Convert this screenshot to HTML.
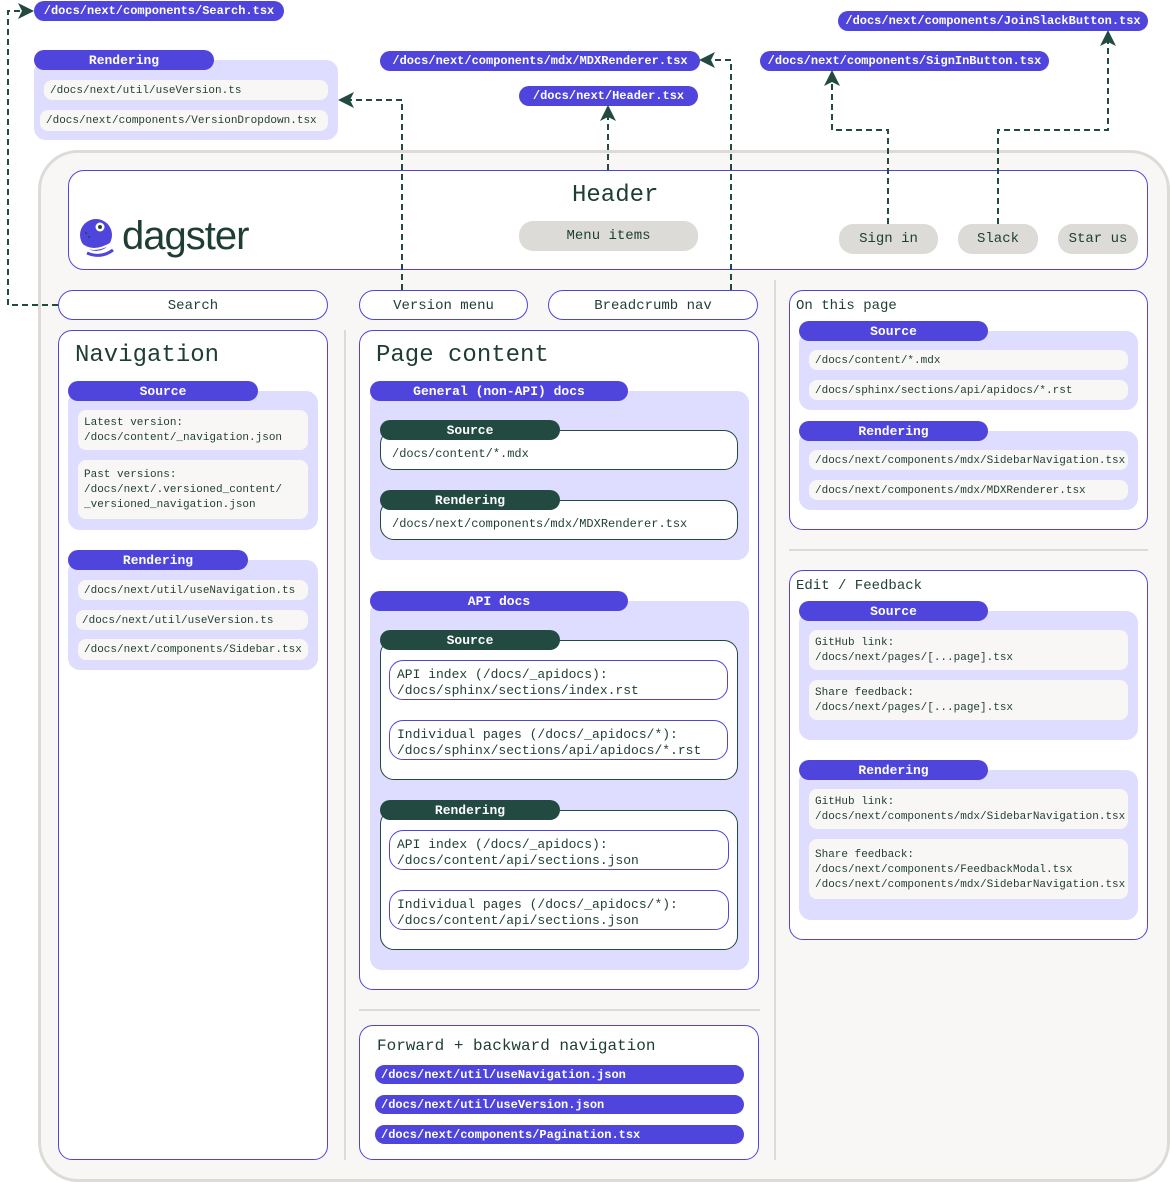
<!DOCTYPE html>
<html><head><meta charset="utf-8"><style>
*{box-sizing:border-box;margin:0;padding:0}
body{width:1170px;height:1182px;background:#fff;position:relative;overflow:hidden;font-family:"Liberation Mono",monospace;color:#1e3d35}
div{position:absolute}
.p{background:#4f45dc;color:#fff;font-weight:bold;font-size:13px;border-radius:10px;height:20px;line-height:21px;text-align:center;white-space:nowrap}
.pl{text-align:left;padding-left:10px;font-size:12px}
.d{background:#224a40;color:#fff;font-weight:bold;font-size:13px;border-radius:10px;height:20px;line-height:21px;text-align:center}
.lav{background:#dedcff;border-radius:12px}
.it{background:#f8f7f5;border-radius:8px;font-size:11px;padding:2px 6px 0;line-height:15px;display:flex;flex-direction:column;justify-content:center}
.box{background:#fff;border:1px solid #4f45dc;border-radius:14px}
.gb{background:#fff;border:1px solid #224a40;border-radius:14px;font-size:12px}
.pb{background:#fff;border:1px solid #4f45dc;border-radius:14px;font-size:13px;padding:6px 7px;line-height:16px}
.pill{background:#fff;border:1px solid #4f45dc;border-radius:15px;text-align:center;font-size:14px;line-height:30px}
.gr{background:#dcdbd8;border-radius:14px;text-align:center;font-size:14px;line-height:30px}
.t{font-size:14px}
</style></head><body>
<div class="p" style="left:34px;top:1px;width:250px;font-size:12px">/docs/next/components/Search.tsx</div>
<div class="lav" style="left:34px;top:60px;width:304px;height:80px"></div>
<div class="p" style="left:34px;top:50px;width:180px">Rendering</div>
<div class="it" style="left:44px;top:80px;width:284px;height:20px">/docs/next/util/useVersion.ts</div>
<div class="it" style="left:40px;top:110px;width:288px;height:21px">/docs/next/components/VersionDropdown.tsx</div>
<div class="p" style="left:380px;top:51px;width:320px;font-size:12px">/docs/next/components/mdx/MDXRenderer.tsx</div>
<div class="p" style="left:519px;top:86px;width:179px;font-size:12px">/docs/next/Header.tsx</div>
<div class="p" style="left:760px;top:51px;width:289px;font-size:12px">/docs/next/components/SignInButton.tsx</div>
<div class="p" style="left:838px;top:11px;width:310px;font-size:12px">/docs/next/components/JoinSlackButton.tsx</div>

<div style="left:38px;top:150px;width:1132px;height:1032px;background:#f8f7f5;border:3px solid #dcdbd8;border-radius:40px"></div>
<div class="box" style="left:68px;top:170px;width:1080px;height:100px;border-radius:16px"></div>
<div style="left:572px;top:182px;font-size:24px">Header</div>
<div class="gr" style="left:519px;top:221px;width:179px">Menu items</div>
<div class="gr" style="left:839px;top:224px;width:99px">Sign in</div>
<div class="gr" style="left:958px;top:224px;width:80px">Slack</div>
<div class="gr" style="left:1058px;top:224px;width:80px">Star us</div>
<svg style="position:absolute;left:77px;top:218px" width="40" height="40" viewBox="0 0 40 40"><circle cx="19" cy="17" r="16" fill="#4f45dc"/><path d="M3 25 q12 12 32 0" stroke="#fff" stroke-width="2" fill="none"/><path d="M6 30 q14 9 30 -2" stroke="#fff" stroke-width="2" fill="none"/><path d="M10 35 q14 6 26 -3" stroke="#4f45dc" stroke-width="3" fill="none"/><circle cx="23" cy="9" r="4.5" fill="#fff"/><circle cx="23" cy="9" r="2" fill="#224a40"/><circle cx="9" cy="15" r="1" fill="#224a40"/><circle cx="12" cy="19" r="1" fill="#224a40"/></svg>
<div style="left:122px;top:214px;font-family:'Liberation Sans',sans-serif;font-size:40px;color:#1e3d35;letter-spacing:-1px">dagster</div>

<div class="pill" style="left:58px;top:290px;width:270px;height:30px">Search</div>
<div class="pill" style="left:359px;top:290px;width:169px;height:30px">Version menu</div>
<div class="pill" style="left:548px;top:290px;width:210px;height:30px">Breadcrumb nav</div>
<div style="left:344px;top:330px;width:2px;height:830px;background:#dcdbd8"></div>
<div style="left:774px;top:280px;width:2px;height:880px;background:#dcdbd8"></div>

<div class="box" style="left:58px;top:330px;width:270px;height:830px"></div>
<div style="left:75px;top:342px;font-size:24px">Navigation</div>
<div class="lav" style="left:68px;top:391px;width:250px;height:139px"></div>
<div class="p" style="left:68px;top:381px;width:190px">Source</div>
<div class="it" style="left:78px;top:410px;width:230px;height:40px">Latest version:<br>/docs/content/_navigation.json</div>
<div class="it" style="left:78px;top:460px;width:230px;height:59px">Past versions:<br>/docs/next/.versioned_content/<br>_versioned_navigation.json</div>
<div class="lav" style="left:68px;top:560px;width:250px;height:110px"></div>
<div class="p" style="left:68px;top:550px;width:180px">Rendering</div>
<div class="it" style="left:78px;top:580px;width:230px;height:20px">/docs/next/util/useNavigation.ts</div>
<div class="it" style="left:76px;top:610px;width:232px;height:20px">/docs/next/util/useVersion.ts</div>
<div class="it" style="left:78px;top:639px;width:230px;height:21px">/docs/next/components/Sidebar.tsx</div>

<div class="box" style="left:359px;top:330px;width:400px;height:660px"></div>
<div style="left:376px;top:342px;font-size:24px">Page content</div>
<div class="lav" style="left:370px;top:391px;width:379px;height:169px"></div>
<div class="p" style="left:370px;top:381px;width:258px">General (non-API) docs</div>
<div class="gb" style="left:380px;top:430px;width:358px;height:40px;padding:16px 0 0 11px">/docs/content/*.mdx</div>
<div class="d" style="left:380px;top:420px;width:180px">Source</div>
<div class="gb" style="left:380px;top:500px;width:358px;height:40px;padding:16px 0 0 11px">/docs/next/components/mdx/MDXRenderer.tsx</div>
<div class="d" style="left:380px;top:490px;width:180px">Rendering</div>
<div class="lav" style="left:370px;top:601px;width:379px;height:369px"></div>
<div class="p" style="left:370px;top:591px;width:258px">API docs</div>
<div class="gb" style="left:380px;top:640px;width:358px;height:140px"></div>
<div class="d" style="left:380px;top:630px;width:180px">Source</div>
<div class="pb" style="left:389px;top:660px;width:339px;height:40px">API index (/docs/_apidocs):<br>/docs/sphinx/sections/index.rst</div>
<div class="pb" style="left:389px;top:720px;width:339px;height:40px">Individual pages (/docs/_apidocs/*):<br>/docs/sphinx/sections/api/apidocs/*.rst</div>
<div class="gb" style="left:380px;top:810px;width:358px;height:140px"></div>
<div class="d" style="left:380px;top:800px;width:180px">Rendering</div>
<div class="pb" style="left:389px;top:830px;width:340px;height:40px">API index (/docs/_apidocs):<br>/docs/content/api/sections.json</div>
<div class="pb" style="left:389px;top:890px;width:340px;height:40px">Individual pages (/docs/_apidocs/*):<br>/docs/content/api/sections.json</div>

<div style="left:359px;top:1009px;width:401px;height:2px;background:#dcdbd8"></div>
<div class="box" style="left:359px;top:1025px;width:400px;height:135px"></div>
<div style="left:377px;top:1037px;font-size:16px">Forward + backward navigation</div>
<div class="p pl" style="left:375px;top:1065px;width:369px;height:19px;line-height:20px;padding-left:6px">/docs/next/util/useNavigation.json</div>
<div class="p pl" style="left:375px;top:1095px;width:369px;height:19px;line-height:20px;padding-left:6px">/docs/next/util/useVersion.json</div>
<div class="p pl" style="left:375px;top:1125px;width:369px;height:19px;line-height:20px;padding-left:6px">/docs/next/components/Pagination.tsx</div>

<div class="box" style="left:789px;top:290px;width:359px;height:240px"></div>
<div class="t" style="left:796px;top:298px">On this page</div>
<div class="lav" style="left:799px;top:331px;width:339px;height:79px"></div>
<div class="p" style="left:799px;top:321px;width:189px">Source</div>
<div class="it" style="left:809px;top:350px;width:319px;height:20px">/docs/content/*.mdx</div>
<div class="it" style="left:809px;top:380px;width:319px;height:20px">/docs/sphinx/sections/api/apidocs/*.rst</div>
<div class="lav" style="left:799px;top:431px;width:339px;height:79px"></div>
<div class="p" style="left:799px;top:421px;width:189px">Rendering</div>
<div class="it" style="left:809px;top:450px;width:319px;height:20px;white-space:nowrap">/docs/next/components/mdx/SidebarNavigation.tsx</div>
<div class="it" style="left:809px;top:480px;width:319px;height:20px">/docs/next/components/mdx/MDXRenderer.tsx</div>
<div style="left:789px;top:549px;width:359px;height:2px;background:#dcdbd8"></div>
<div class="box" style="left:789px;top:570px;width:359px;height:370px"></div>
<div class="t" style="left:796px;top:578px">Edit / Feedback</div>
<div class="lav" style="left:799px;top:611px;width:339px;height:129px"></div>
<div class="p" style="left:799px;top:601px;width:189px">Source</div>
<div class="it" style="left:809px;top:630px;width:319px;height:40px">GitHub link:<br>/docs/next/pages/[...page].tsx</div>
<div class="it" style="left:809px;top:680px;width:319px;height:40px">Share feedback:<br>/docs/next/pages/[...page].tsx</div>
<div class="lav" style="left:799px;top:770px;width:339px;height:150px"></div>
<div class="p" style="left:799px;top:760px;width:189px">Rendering</div>
<div class="it" style="left:809px;top:789px;width:319px;height:40px;white-space:nowrap">GitHub link:<br>/docs/next/components/mdx/SidebarNavigation.tsx</div>
<div class="it" style="left:809px;top:839px;width:319px;height:60px;white-space:nowrap">Share feedback:<br>/docs/next/components/FeedbackModal.tsx<br>/docs/next/components/mdx/SidebarNavigation.tsx</div>

<svg style="position:absolute;left:0;top:0" width="1170" height="1182">
<defs><marker id="a" markerWidth="8" markerHeight="8" refX="7" refY="4" orient="auto"><path d="M0 0 L8 4 L0 8 L2 4Z" fill="#224a40"/></marker></defs>
<g stroke="#224a40" stroke-width="2" fill="none" stroke-dasharray="6 4" marker-end="url(#a)">
<path d="M58 305 H8 V11 H32"/>
<path d="M402 290 V100 H340"/>
<path d="M731 290 V60 H701"/>
<path d="M608 170 V107"/>
<path d="M888 224 V130 H832 V72"/>
<path d="M998 224 V130 H1108 V32"/>
</g></svg>
</body></html>
